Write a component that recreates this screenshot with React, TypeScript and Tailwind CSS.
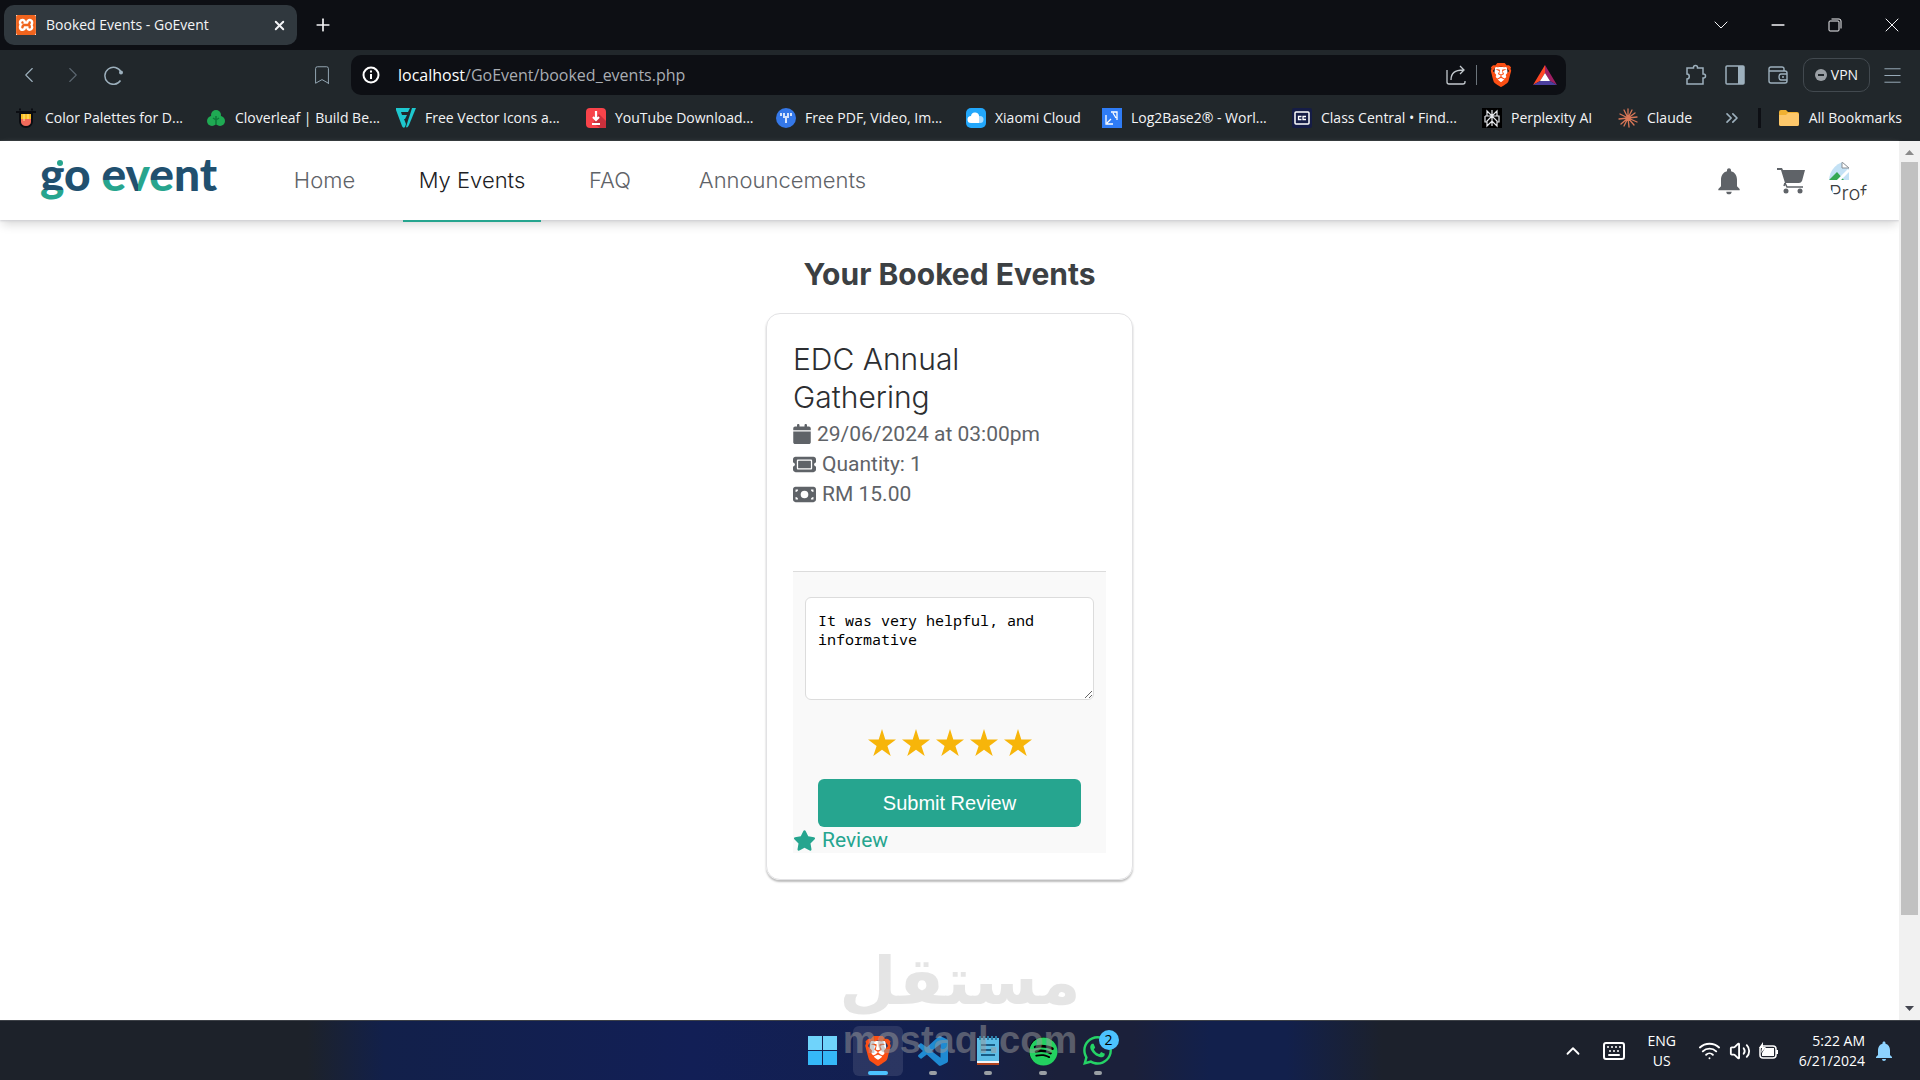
import { ReactNode } from 'react';
import { clsx } from 'clsx';
import {
  Bookmark,
  ChevronDown,
  ChevronLeft,
  ChevronRight,
  ChevronsRight,
  ChevronUp,
  Keyboard,
  Menu,
  Minus,
  Plus,
  Volume2,
  Wifi,
  X,
} from 'lucide-react';
import { BiLogoVisualStudio } from 'react-icons/bi';
import { FaCalendar, FaMoneyBill, FaSpotify, FaStar, FaTicket, FaWhatsapp } from 'react-icons/fa6';
import { MdNotifications } from 'react-icons/md';
import { SiBrave, SiXampp } from 'react-icons/si';

const UI_FONT = "font-['Open_Sans','Noto_Sans',sans-serif]";

interface BookmarkItem {
  label: string;
  icon: ReactNode;
  width?: string;
}

const bookmarks: BookmarkItem[] = [
  { label: 'Color Palettes for D...', icon: <PaletteIcon />, width: 'w-[190px]' },
  { label: 'Cloverleaf | Build Be...', icon: <CloverIcon />, width: 'w-[190px]' },
  { label: 'Free Vector Icons a...', icon: <VectorIcon />, width: 'w-[190px]' },
  { label: 'YouTube Download...', icon: <DownloadIcon />, width: 'w-[190px]' },
  { label: 'Free PDF, Video, Im...', icon: <TinyWowIcon />, width: 'w-[190px]' },
  { label: 'Xiaomi Cloud', icon: <CloudIcon />, width: 'w-[136px]' },
  { label: 'Log2Base2® - Worl...', icon: <LogIcon />, width: 'w-[190px]' },
  { label: 'Class Central • Find...', icon: <ClassCentralIcon />, width: 'w-[190px]' },
  { label: 'Perplexity AI', icon: <PerplexityIcon />, width: 'w-[136px]' },
  { label: 'Claude', icon: <BurstIcon /> },
];

const navLinks = [
  { label: 'Home', width: 'w-[93px]' },
  { label: 'My Events', width: 'w-[138px]', active: true },
  { label: 'FAQ', width: 'w-[74px]' },
  { label: 'Announcements', width: 'w-[207px]' },
];

function PaletteIcon() {
  return (
    <svg viewBox="0 0 20 20" className="size-5">
      <path d="M0 4h20M3 1.500h2M15 1.500h2" stroke="#0b0d12" strokeWidth="2" />
      <path d="M3 4h14v9c0 4-3 7-7 7s-7-3-7-7z" fill="#0b0d12" />
      <path d="M5 6h10v5H5z" fill="#fbbf24" />
      <path d="M5 11h10v3c0 2-2 4-5 4s-5-2-5-4z" fill="#f26a5a" />
      <path d="M8 6v7M12 6v5" stroke="#fde68a" strokeWidth="1" />
    </svg>
  );
}

function CloverIcon() {
  return (
    <svg viewBox="0 0 20 20" className="size-5" fill="#1faa53">
      <circle cx="10" cy="7" r="5" />
      <circle cx="6" cy="13" r="5" />
      <circle cx="14" cy="13" r="5" />
      <path d="M10 8v8M10 12l-3-2M10 12l3-2" stroke="#0d7a3a" strokeWidth="1.500" />
    </svg>
  );
}

function VectorIcon() {
  return (
    <svg viewBox="0 0 20 20" className="size-5" fill="#1ec8cf">
      <path d="M0 0h14l-2 4H5l1 3h5l-2 4H8l2 5-1 3c-1 1-2 1-3-1L0 2z" />
      <path d="M16 0h4l-7 17c-1 2-2 3-3 2z" />
    </svg>
  );
}

function DownloadIcon() {
  return (
    <svg viewBox="0 0 20 20" className="size-5">
      <rect width="20" height="20" rx="4" fill="#f8434a" />
      <path d="M13 6l7 7v7h-6l-7-5z" fill="#c9303c" />
      <path d="M10 3v8M7 9l3 3 3-3M6 16h8" stroke="#fff" strokeWidth="2.200" fill="none" />
    </svg>
  );
}

function TinyWowIcon() {
  return (
    <svg viewBox="0 0 20 20" className="size-5">
      <circle cx="10" cy="10" r="10" fill="#3578e8" />
      <path d="M5 5v3M15 5v3M8 5v5M12 5v5M10 8v7" stroke="#fff" strokeWidth="1.600" fill="none" />
    </svg>
  );
}

function CloudIcon() {
  return (
    <svg viewBox="0 0 20 20" className="size-5">
      <rect width="20" height="20" rx="5" fill="#22a7fb" />
      <circle cx="14" cy="11.500" r="3.500" fill="#a9dcff" />
      <path d="M5 15a3.500 3.500 0 0 1 0-7 4 4 0 0 1 8 1v6z" fill="#fff" />
    </svg>
  );
}

function LogIcon() {
  return (
    <svg viewBox="0 0 20 20" className="size-5">
      <rect width="20" height="20" fill="#2f7cf6" />
      <path d="M4 7v9h7M5 15l4-4M9 4h6v8M11 5l3 5" stroke="#fff" strokeWidth="1.300" fill="none" />
    </svg>
  );
}

function ClassCentralIcon() {
  return (
    <svg viewBox="0 0 20 20" className="size-5">
      <rect width="20" height="20" rx="2" fill="#151c46" />
      <rect x="3" y="4" width="14" height="12" rx="1" fill="none" stroke="#fff" strokeWidth="1.500" />
      <path d="M9.500 8.500h-3v3h3M14 8.500h-3v3h3" stroke="#fff" strokeWidth="1.300" fill="none" />
    </svg>
  );
}

function PerplexityIcon() {
  return (
    <svg viewBox="0 0 20 20" className="size-5">
      <rect width="20" height="20" fill="#000" />
      <path
        d="M10 2v16M5 3l5 5 5-5v5H5zM3 8h14v6h-2M3 8v6h2M10 8l-5 5v5l5-5 5 5v-5z"
        stroke="#e5e7eb"
        strokeWidth="1.200"
        fill="none"
      />
    </svg>
  );
}

function BurstIcon() {
  return (
    <svg viewBox="0 0 20 20" className="size-5">
      <path
        d="M10 10V1M10 10l4-8M10 10l7-5M10 10l9-1M10 10l9 4M10 10l6 7M10 10l1 9M10 10l-4 8M10 10l-7 6M10 10l-9 1M10 10L2 6M10 10L6 2"
        stroke="#d97757"
        strokeWidth="1.300"
        strokeLinecap="round"
      />
    </svg>
  );
}

function BraveIcon({ className }: { className: string }) {
  return (
    <svg viewBox="0 0 24 24" className={className}>
      <path d="M6 4h12l1 10-7 7-7-7z" fill="#fff" />
      <SiBrave size={24} color="#fb4f14" />
    </svg>
  );
}

function TabStrip() {
  return (
    <div className="flex h-[50px] items-center bg-[#0d0f14] pl-1 text-gray-100">
      <div className="flex h-10 w-[293px] items-center rounded-[10px] bg-[#30383e] pr-[10px] pl-3">
        <span className="grid size-5 place-items-center bg-white">
          <SiXampp size={20} color="#f0641e" />
        </span>
        <span className="ml-[10px] text-sm whitespace-nowrap">Booked Events - GoEvent</span>
        <button aria-label="Close tab" className="ml-auto">
          <X size={15} strokeWidth={3} />
        </button>
      </div>
      <button aria-label="New tab" className="ml-4">
        <Plus size={20} strokeWidth={2} />
      </button>
      <div className="ml-auto flex">
        <button aria-label="Search tabs" className="grid w-[57px] place-items-center">
          <ChevronDown size={24} strokeWidth={1} />
        </button>
        <button aria-label="Minimize" className="grid w-[57px] place-items-center">
          <Minus size={20} strokeWidth={2} />
        </button>
        <button aria-label="Restore" className="grid w-[57px] place-items-center">
          <svg viewBox="0 0 14 14" className="size-[14px]" fill="none" stroke="currentColor">
            <rect x="1" y="3" width="10" height="10" rx="1" />
            <path d="M3.500 1H11q2 0 2 2v7.500" />
          </svg>
        </button>
        <button aria-label="Close" className="grid w-[57px] place-items-center">
          <X size={24} strokeWidth={1} />
        </button>
      </div>
    </div>
  );
}

function AddressBar() {
  return (
    <div className="flex h-[50px] items-center text-[#9db0bd]">
      <div className="flex flex-none items-center gap-[18px] pl-4">
        <button aria-label="Back">
          <ChevronLeft size={26} strokeWidth={1} />
        </button>
        <button aria-label="Forward" className="text-[#5b6670]">
          <ChevronRight size={26} strokeWidth={1} />
        </button>
        <button aria-label="Reload">
          <svg viewBox="0 0 20 20" className="size-5" fill="none" stroke="currentColor" strokeWidth="1.500">
            <path d="M17 7A8.500 8.500 0 1 0 16.500 15.500" />
            <circle cx="17" cy="7.500" r="2" fill="currentColor" stroke="none" />
          </svg>
        </button>
      </div>
      <button aria-label="Bookmark this page" className="ml-[187px]">
        <Bookmark size={22} strokeWidth={1} />
      </button>
      <div className="ml-[18px] flex h-10 flex-1 items-center rounded-[10px] bg-[#0d0f14] pr-[9px] pl-[11px] text-white">
        <svg viewBox="0 0 18 18" className="size-[18px]" fill="none" stroke="currentColor" strokeWidth="2">
          <circle cx="9" cy="9" r="7.500" />
          <path d="M9 8v5M9 4.500v2" />
        </svg>
        <label htmlFor="url" className="ml-[18px] text-base">
          localhost
        </label>
        <input
          id="url"
          defaultValue="/GoEvent/booked_events.php"
          className="min-w-0 flex-1 bg-transparent text-base text-[#a9adb3] outline-none"
        />
        <button aria-label="Share">
          <svg viewBox="0 0 20 20" className="size-5" fill="none" stroke="#c3c9ce" strokeWidth="1.300">
            <path d="M1 5v12q0 2 2 2h14q2 0 2-2v-1M5 15c0-7 4-10 12-10M14 1l4 4-4 4" />
          </svg>
        </button>
        <span className="ml-[10px] h-5 w-px bg-[#6b747b]" />
        <button aria-label="Brave Shields" className="ml-3">
          <BraveIcon className="size-6" />
        </button>
        <button aria-label="Brave Rewards" className="ml-5">
          <svg viewBox="0 0 24 22" className="h-[22px] w-6">
            <path d="M12 1L0 21l7-4 5-8z" fill="#ff4724" />
            <path d="M12 1l12 20-7-4-5-8z" fill="#9e1f63" />
            <path d="M0 21h24l-7-4H7z" fill="#4b3f9e" />
            <path d="M12 9l5 8H7z" fill="#fff" />
          </svg>
        </button>
      </div>
      <div className="ml-[119px] flex items-center pr-4">
        <button aria-label="Extensions">
          <svg viewBox="0 0 22 22" className="size-[22px]" fill="none" stroke="currentColor" strokeWidth="1.500">
            <path d="M2 4h6.500V3.500a2 2 0 0 1 4 0V4H18v6h.5a2 2 0 0 1 0 4H18v6H2v-5c3 0 3-5 0-5z" />
          </svg>
        </button>
        <button aria-label="Sidebar" className="ml-[18px]">
          <svg viewBox="0 0 20 20" className="size-5">
            <rect x="1" y="1" width="18" height="18" rx="1" fill="none" stroke="currentColor" strokeWidth="1.500" />
            <path d="M13 1h6v18h-6z" fill="currentColor" />
          </svg>
        </button>
        <button aria-label="Wallet" className="ml-[23px]">
          <svg viewBox="0 0 20 18" className="h-[18px] w-5" fill="none" stroke="currentColor" strokeWidth="1.400">
            <path d="M16 5V3q0-2-2-2H3Q1 1 1 3v12q0 2 2 2h14q2 0 2-2V7q0-2-2-2H1M19 8h-6q-2 0-2 3t2 3h6M14 11h2" />
          </svg>
        </button>
        <button
          aria-label="VPN"
          className="ml-[15px] flex h-[34px] w-[67px] items-center justify-center gap-1 rounded-[10px] border border-[#42494f] text-sm text-gray-100"
        >
          <svg viewBox="0 0 12 12" className="size-3">
            <circle cx="6" cy="6" r="6" fill="#9a9fa4" />
            <path d="M3 6h6" stroke="#21272b" strokeWidth="2" />
          </svg>
          VPN
        </button>
        <button aria-label="Menu" className="ml-[11px]">
          <Menu size={23} strokeWidth={1} />
        </button>
      </div>
    </div>
  );
}

function BookmarksBar() {
  return (
    <div className="flex h-[41px] items-center pr-[18px] pb-[5px] pl-4 text-sm whitespace-nowrap text-gray-100">
      {bookmarks.map(({ label, icon, width }) => (
        <a key={label} href="#" className={clsx('flex flex-none items-center gap-[9px]', width)}>
          {icon}
          {label}
        </a>
      ))}
      <button aria-label="More bookmarks" className="ml-auto text-[#9db0bd]">
        <ChevronsRight size={20} strokeWidth={2} />
      </button>
      <span className="ml-4 h-5 w-[3px] bg-[#0d0f14]" />
      <a href="#" className="ml-[18px] flex items-center gap-[10px]">
        <svg viewBox="0 0 20 16" className="h-4 w-5">
          <path d="M0 2q0-2 2-2h5l2 2h9q2 0 2 2v10q0 2-2 2H2q-2 0-2-2z" fill="#f0b132" />
          <path d="M0 5h7l2-2h9q2 0 2 2v9q0 2-2 2H2q-2 0-2-2z" fill="#fdc86b" />
        </svg>
        All Bookmarks
      </a>
    </div>
  );
}

function Logo() {
  return (
    <svg viewBox="0 0 180 46" className="h-[46px] w-[180px] overflow-visible" role="img" aria-label="go event">
      <defs>
        <linearGradient id="tail" gradientUnits="userSpaceOnUse" x1="0" y1="0" x2="0" y2="46">
          <stop offset="0.690" stopColor="#21506f" />
          <stop offset="0.690" stopColor="#27a58e" />
        </linearGradient>
        <linearGradient id="smile" gradientUnits="userSpaceOnUse" x1="0" y1="0" x2="0" y2="46">
          <stop offset="0.480" stopColor="#21506f" />
          <stop offset="0.480" stopColor="#27a58e" />
        </linearGradient>
        <linearGradient id="tick" gradientUnits="userSpaceOnUse" x1="0" y1="0" x2="180" y2="0">
          <stop offset="0.545" stopColor="#21506f" />
          <stop offset="0.545" stopColor="#27a58e" />
        </linearGradient>
      </defs>
      <text y="33" fontSize="46" className="font-['Lato',sans-serif] font-black" fill="#21506f">
        <tspan fill="url(#tail)">g</tspan>o <tspan fill="url(#smile)">e</tspan>
        <tspan fill="url(#tick)">v</tspan>
        <tspan fill="url(#smile)">e</tspan>nt
      </text>
      <circle cx="20" cy="5" r="3" fill="#27a58e" />
    </svg>
  );
}

function SiteHeader() {
  return (
    <header className="flex h-[79px] items-center pr-[30px] pl-10 shadow-[0_1px_2px_#cfcfd4,0_6px_10px_-2px_#d6d6d6]">
      <a href="#">
        <Logo />
      </a>
      <nav className="ml-[58px] flex gap-8 self-stretch font-['Inter',sans-serif] text-[22px] font-light text-[#5f6368]">
        {navLinks.map(({ label, width, active }) => (
          <a
            key={label}
            href="#"
            className={clsx(
              'relative flex items-center justify-center whitespace-nowrap',
              width,
              active && 'text-[#202124] after:absolute after:inset-x-0 after:-bottom-0.5 after:h-0.5 after:bg-[#26a58f]',
            )}
          >
            {label}
          </a>
        ))}
      </nav>
      <div className="ml-auto flex items-center text-[#5f6368]">
        <button aria-label="Notifications">
          <MdNotifications size={32} />
        </button>
        <button aria-label="Cart" className="ml-8">
          <svg viewBox="0 0 28 26" className="h-[26px] w-7" fill="currentColor">
            <path d="M0 0h5l1 2h22l-3 11q-1 2-3 2H8L4 2H0z" />
            <path d="M8 15l2 4h16M8 15l-1 3" fill="none" stroke="currentColor" strokeWidth="1.500" />
            <circle cx="9" cy="23" r="2.500" />
            <circle cx="23" cy="23" r="2.500" />
          </svg>
        </button>
        <a
          href="#"
          className="ml-[24px] block size-10 overflow-hidden rounded-full font-['Inter',sans-serif] text-xl leading-6 font-light text-[#3c4043]"
        >
          <svg viewBox="0 0 20 20" className="size-5">
            <path d="M0 1h13l7 6v12H0z" fill="#c3e1f5" />
            <path d="M13 1v6h7z" fill="#fff" stroke="#8a8f94" />
            <path d="M0 19l8-8 7 8z" fill="#35a853" />
            <path d="M9 20L20 9" stroke="#fff" strokeWidth="3" />
          </svg>
          <span className="block">Prof</span>
        </a>
      </div>
    </header>
  );
}

function EventCard() {
  return (
    <article className="mt-5 w-[367px] rounded-[14px] border border-[#e2e2e4] p-[26px] shadow-[0_2px_2px_#bdbdbd]">
      <h2 className="mb-[3px] w-60 font-['Inter',sans-serif] text-[30px] leading-[38px] font-light text-[#2c2e31]">
        EDC Annual Gathering
      </h2>
      <div className="font-['Roboto',sans-serif] text-[21px] leading-[30px] text-[#5f6368]">
        <p className="flex items-center gap-1.5">
          <FaCalendar className="h-5 w-[18px]" />
          29/06/2024 at 03:00pm
        </p>
        <p className="flex items-center gap-1.5">
          <FaTicket size={23} />
          Quantity: 1
        </p>
        <p className="flex items-center gap-1.5">
          <FaMoneyBill size={23} />
          RM 15.00
        </p>
      </div>
      <form
        className="mt-[62px] border-t border-[#dcdcdc] bg-[#f9f9f9] pt-[25px]"
        onSubmit={(e) => e.preventDefault()}
      >
        <textarea
          aria-label="Your review"
          defaultValue="It was very helpful, and informative"
          className="mx-3 block h-[103px] w-[289px] rounded-md border border-[#dcdcdc] bg-white px-3 py-[13px] font-['Noto_Sans_Mono','DejaVu_Sans_Mono',monospace] text-[15px] leading-[19px] text-black"
        />
        <fieldset className="mt-[29px] flex justify-center gap-1.5">
          {[1, 2, 3, 4, 5].map((value) => (
            <label key={value} className="relative">
              <input
                type="radio"
                name="rating"
                value={value}
                defaultChecked={value === 5}
                aria-label={`${value} stars`}
                className="absolute inset-0 appearance-none"
              />
              <svg viewBox="0 0 28 28" className="block size-7" fill="#f7b50a">
                <path d="M14 0l3.300 10.500H28l-8.600 6.400L22.700 27 14 20.800 5.300 27l3.300-10.100L0 10.500h10.700z" />
              </svg>
            </label>
          ))}
        </fieldset>
        <button className="mx-auto mt-[22px] block h-12 w-[263px] rounded-md bg-[#26a58f] font-['Liberation_Sans',sans-serif] text-xl text-white">
          Submit Review
        </button>
        <a
          href="#"
          className="flex items-center gap-1.5 font-['Roboto',sans-serif] text-[21px] leading-[26px] text-[#26a58f]"
        >
          <FaStar size={23} />
          Review
        </a>
      </form>
    </article>
  );
}

function ScrollBar() {
  return (
    <div className="flex w-[21px] flex-col items-center bg-[#f1f1f1]">
      <svg viewBox="0 0 21 21" className="size-[21px]">
        <path d="M6 14l4.500-5 4.500 5z" fill="#8b8b8b" />
      </svg>
      <div className="w-full flex-1 px-0.5">
        <div className="h-9/10 bg-[#c1c1c1]" />
      </div>
      <svg viewBox="0 0 21 21" className="size-[21px]">
        <path d="M6 7l4.500 5L15 7z" fill="#444650" />
      </svg>
    </div>
  );
}

interface TaskButtonProps {
  label: string;
  children: ReactNode;
  state?: 'active' | 'open';
}

function TaskButton({ label, children, state }: TaskButtonProps) {
  return (
    <button aria-label={label} className="grid w-[55px] place-items-center">
      <span
        className={clsx(
          'relative grid size-[50px] place-items-center rounded-md',
          state === 'active' && 'bg-white/10',
        )}
      >
        {children}
        {state && (
          <span
            className={clsx(
              'absolute bottom-px h-1 rounded-full',
              state === 'active' ? 'w-5 bg-[#4cc2ff]' : 'w-2 bg-[#9a9fa4]',
            )}
          />
        )}
      </span>
    </button>
  );
}

function TaskBar() {
  return (
    <footer
      className={clsx(
        'grid h-[60px] grid-cols-[1fr_auto_1fr] border-t border-[#3d4147] text-white',
        'bg-[linear-gradient(to_right,#1d222a_16%,#12204a_20%,#121f56_36%,#13204f_48%,#1b203a_55%,#1b203a_59%,#12204c_63%,#12204c_67%,#1c212c_72%)]',
        UI_FONT,
      )}
    >
      <div />
      <div className="flex">
        <TaskButton label="Start">
          <svg viewBox="0 0 29 29" className="size-[29px]">
            <path d="M0 0h14v14H0zM15 0h14v14H15z" fill="#6fd3fb" />
            <path d="M0 15h14v14H0zM15 15h14v14H15z" fill="#35b8f8" />
          </svg>
        </TaskButton>
        <TaskButton label="Brave" state="active">
          <BraveIcon className="size-[30px]" />
        </TaskButton>
        <TaskButton label="Visual Studio Code" state="open">
          <BiLogoVisualStudio size={36} color="#1f8ad2" />
        </TaskButton>
        <TaskButton label="Notepad" state="open">
          <svg viewBox="0 0 22 29" className="h-[29px] w-[22px]">
            <path d="M0 2h22v24H0z" fill="#5cbde6" />
            <path d="M0 25h22v2H0z" fill="#f3f4f6" />
            <path d="M0 27h22v2H0z" fill="#b3441e" />
            <path d="M3 0v4M7 0v4M11 0v4M15 0v4M19 0v4" stroke="#2b7ea8" strokeWidth="2" />
            <path d="M4 9h14M4 14h10M4 19h14" stroke="#175c86" strokeWidth="2" />
          </svg>
        </TaskButton>
        <TaskButton label="Spotify" state="open">
          <span className="grid size-7 place-items-center rounded-full bg-black">
            <FaSpotify size={29} color="#23d160" />
          </span>
        </TaskButton>
        <TaskButton label="WhatsApp" state="open">
          <FaWhatsapp size={33} color="#25d366" />
          <span className="absolute top-1 right-1 grid size-5 place-items-center rounded-full bg-[#4cc2ff] text-sm text-black">
            2
          </span>
        </TaskButton>
      </div>
      <div className="flex items-center justify-end pr-6 text-sm leading-5">
        <button aria-label="Show hidden icons">
          <ChevronUp size={22} strokeWidth={2} />
        </button>
        <button aria-label="Touch keyboard" className="ml-[18px]">
          <Keyboard size={24} strokeWidth={2} />
        </button>
        <div className="ml-5 w-8 text-center">
          ENG
          <br />
          US
        </div>
        <div className="ml-5 flex items-center gap-2">
          <Wifi size={23} strokeWidth={2} />
          <Volume2 size={22} strokeWidth={2} />
          <svg viewBox="0 0 20 17" className="h-[17px] w-5">
            <rect x="1" y="4" width="16" height="12" rx="3" fill="none" stroke="#fff" strokeWidth="1.500" />
            <path d="M6 6h9v8H3v-3z" fill="#fff" />
            <path d="M18 8v4" stroke="#fff" strokeWidth="2" />
            <path d="M4 0L0 6h3l-1 5 5-6H4z" fill="#fff" />
          </svg>
        </div>
        <div className="ml-5 text-right whitespace-nowrap">
          5:22 AM
          <br />
          6/21/2024
        </div>
        <MdNotifications size={24} color="#8dd3ff" className="ml-[7px]" />
      </div>
    </footer>
  );
}

export default function App() {
  return (
    <div className="relative flex min-h-screen flex-col bg-white">
      <div className={clsx('bg-[#21272b]', UI_FONT)}>
        <TabStrip />
        <AddressBar />
        <BookmarksBar />
      </div>
      <div className="flex flex-1">
        <div className="flex-1">
          <SiteHeader />
          <main className="flex flex-col items-center pt-[35px]">
            <h1 className="font-['Inter',sans-serif] text-[30px] leading-[38px] font-bold text-[#3c4043]">
              Your Booked Events
            </h1>
            <EventCard />
          </main>
        </div>
        <ScrollBar />
      </div>
      <TaskBar />
      <div className="pointer-events-none absolute inset-x-0 bottom-[18px] flex flex-col items-center font-bold text-[#9a9a9a]">
        <span lang="ar" dir="rtl" className="font-['DejaVu_Sans',sans-serif] text-[66px] leading-[72px] opacity-25">
          مستقل
        </span>
        <span className="font-['Liberation_Sans',sans-serif] text-[38px] leading-[44px] opacity-50">mostaql.com</span>
      </div>
    </div>
  );
}
